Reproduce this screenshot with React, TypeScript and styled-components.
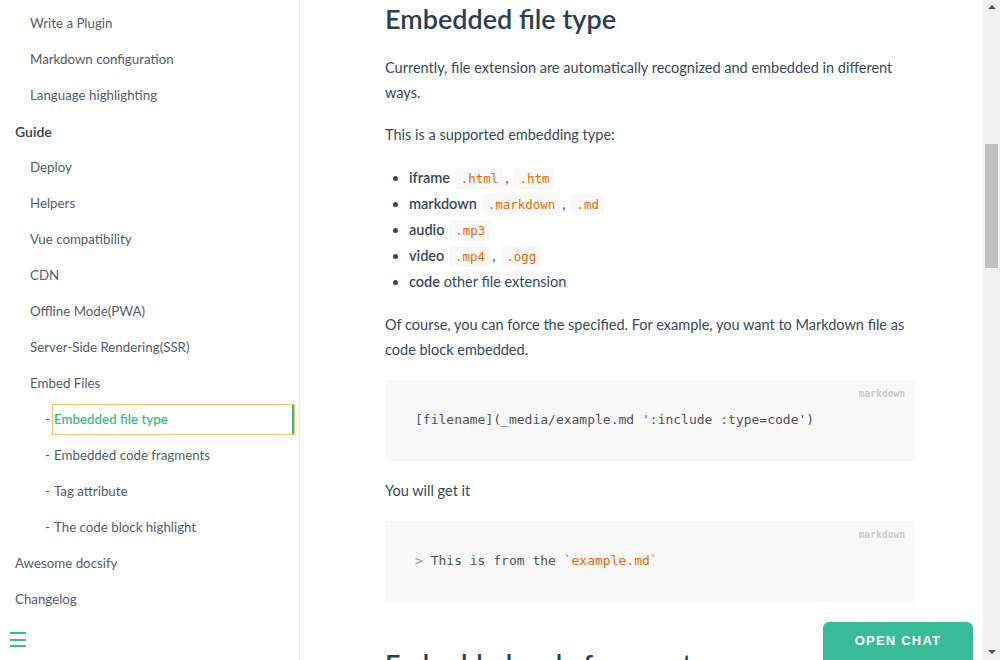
import React from "react";
import styled, { createGlobalStyle } from "styled-components";

interface NavItem {
    label: string;
    level: 0 | 1 | 2;
    section?: boolean;
    active?: boolean;
}

const navItems: NavItem[] = [
    { label: "Write a Plugin", level: 1 },
    { label: "Markdown configuration", level: 1 },
    { label: "Language highlighting", level: 1 },
    { label: "Guide", level: 0, section: true },
    { label: "Deploy", level: 1 },
    { label: "Helpers", level: 1 },
    { label: "Vue compatibility", level: 1 },
    { label: "CDN", level: 1 },
    { label: "Offline Mode(PWA)", level: 1 },
    { label: "Server-Side Rendering(SSR)", level: 1 },
    { label: "Embed Files", level: 1 },
    { label: "Embedded file type", level: 2, active: true },
    { label: "Embedded code fragments", level: 2 },
    { label: "Tag attribute", level: 2 },
    { label: "The code block highlight", level: 2 },
    { label: "Awesome docsify", level: 0 },
    { label: "Changelog", level: 0 },
];

const MONO = `"DejaVu Sans Mono", "Liberation Mono", monospace`;

const GlobalStyle = createGlobalStyle`
    html, body {
        margin: 0;
        padding: 0;
        overflow: hidden;
        background: #fff;
    }
    body {
        font-family: Lato, "Noto Sans", sans-serif;
        color: #34495e;
        -webkit-font-smoothing: antialiased;
    }
    * {
        box-sizing: border-box;
    }
`;

const App: React.FC = () => {
    return (
        <Page>
            <GlobalStyle />
            <Sidebar>
                <NavList>
                    {navItems.map(item => (
                        <NavRow key={item.label} level={item.level}>
                            {item.level === 2 && <Dash>-</Dash>}
                            <NavLink $section={item.section} $active={item.active}>
                                {item.label}
                            </NavLink>
                        </NavRow>
                    ))}
                </NavList>
                <SidebarToggle aria-label="toggle sidebar">
                    <ToggleLine />
                    <ToggleLine />
                    <ToggleLine />
                </SidebarToggle>
            </Sidebar>

            <Main>
                <Article>
                    <H2>Embedded file type</H2>
                    <P>
                        Currently, file extension are automatically recognized and embedded in different
                        ways.
                    </P>
                    <P>This is a supported embedding type:</P>
                    <List>
                        <li>
                            <strong>iframe</strong> <Code>.html</Code>, <Code>.htm</Code>
                        </li>
                        <li>
                            <strong>markdown</strong> <Code>.markdown</Code>, <Code>.md</Code>
                        </li>
                        <li>
                            <strong>audio</strong> <Code>.mp3</Code>
                        </li>
                        <li>
                            <strong>video</strong> <Code>.mp4</Code>, <Code>.ogg</Code>
                        </li>
                        <li>
                            <strong>code</strong> other file extension
                        </li>
                    </List>
                    <P>
                        Of course, you can force the specified. For example, you want to Markdown file as
                        code block embedded.
                    </P>
                    <Pre>
                        <LangLabel>markdown</LangLabel>
                        <PreCode>[filename](_media/example.md ':include :type=code')</PreCode>
                    </Pre>
                    <P>You will get it</P>
                    <Pre>
                        <LangLabel>markdown</LangLabel>
                        <PreCode>
                            <Punct>&gt;</Punct> This is from the <Tick>`example.md`</Tick>
                        </PreCode>
                    </Pre>
                    <NextHeading>Embedded code fragments</NextHeading>
                </Article>
                <ChatButton>OPEN CHAT</ChatButton>
            </Main>

            <ScrollTrack>
                <ScrollArrow $up />
                <ScrollThumb />
                <ScrollArrow />
            </ScrollTrack>
        </Page>
    );
};

const Page = styled.div`
    display: flex;
    width: 100vw;
    height: 100vh;
    overflow: hidden;
`;

const Sidebar = styled.aside`
    width: 300px;
    flex-shrink: 0;
    display: flex;
    flex-direction: column;
    border-right: 1px solid rgba(0, 0, 0, 0.07);
    overflow: hidden;
`;

const NavList = styled.ul`
    list-style: none;
    margin: 0;
    padding: 5px 0 0;
    flex: 1;
    font-size: 13.3px;
`;

const NavRow = styled.li<{ level: number }>`
    display: flex;
    align-items: center;
    height: 36px;
    padding-left: ${p => (p.level === 0 ? 15 : p.level === 1 ? 30 : 45)}px;
    padding-right: 5px;
`;

const Dash = styled.span`
    width: 9px;
    color: #505d6b;
`;

const NavLink = styled.a<{ $section?: boolean; $active?: boolean }>`
    flex: ${p => (p.$active ? 1 : "0 1 auto")};
    display: block;
    line-height: 29px;
    color: ${p => (p.$active ? "#42b983" : p.$section ? "#364149" : "#505d6b")};
    font-weight: ${p => (p.$active || p.$section ? 600 : 400)};
    font-size: ${p => (p.$section ? "14px" : "13.3px")};
    text-decoration: none;
    white-space: nowrap;
    cursor: pointer;
    ${p =>
        p.$active &&
        `
        outline: 1px solid #f1c46c;
        border-right: 2px solid #42b983;
        margin-left: -1px;
        padding-left: 1px;
    `}
`;

const SidebarToggle = styled.button`
    display: flex;
    flex-direction: column;
    gap: 4.5px;
    width: 100%;
    padding: 11px 10px 13px;
    border: 0;
    background: rgba(255, 255, 255, 0.8);
    cursor: pointer;
`;

const ToggleLine = styled.span`
    display: block;
    width: 16px;
    height: 2px;
    background: #42b983;
`;

const Main = styled.main`
    flex: 1;
    position: relative;
    overflow: hidden;
`;

const Article = styled.section`
    width: 530px;
    margin-left: 85px;
    display: flex;
    flex-direction: column;
    gap: 17.5px;
    font-size: 14.5px;
    line-height: 25px;
`;

const H2 = styled.h2`
    margin: 1px 0 0;
    font-size: 27px;
    line-height: 36px;
    font-weight: 600;
    color: #2c3e50;
`;

const NextHeading = styled(H2)`
    margin-top: 27px;
`;

const P = styled.p`
    margin: 0;
    color: #34495e;
`;

const List = styled.ul`
    margin: 0;
    padding-left: 24px;
    color: #34495e;

    li {
        height: 26px;
        line-height: 26px;
    }

    strong {
        font-weight: 600;
    }
`;

const Code = styled.code`
    font-family: ${MONO};
    font-size: 12.5px;
    line-height: 16px;
    color: #e96900;
    background: #f8f8f8;
    border-radius: 2px;
    margin: 0 2px;
    padding: 3px 5px;
`;

const Pre = styled.pre`
    position: relative;
    margin: 0;
    padding: 0 25px;
    background: #f8f8f8;
    height: 81px;
    display: flex;
    align-items: center;
`;

const PreCode = styled.code`
    font-family: ${MONO};
    font-size: 13px;
    line-height: 24px;
    color: #525252;
    padding: 0 5px;
`;

const Punct = styled.span`
    color: #999;
`;

const Tick = styled.span`
    color: #e96900;
`;

const LangLabel = styled.span`
    position: absolute;
    top: 6px;
    right: 10px;
    font-family: ${MONO};
    font-size: 9.6px;
    font-weight: 700;
    line-height: 16px;
    color: #ccc;
`;

const ChatButton = styled.button`
    position: fixed;
    right: 27px;
    bottom: -2px;
    width: 150px;
    height: 40px;
    padding: 0 0 4px;
    border: 0;
    border-radius: 6px 6px 0 0;
    background: #37bc96;
    color: #fff;
    font-family: "Liberation Sans", Arial, sans-serif;
    font-size: 13px;
    font-weight: 700;
    letter-spacing: 1.2px;
    cursor: pointer;
`;

const ScrollTrack = styled.div`
    width: 17px;
    flex-shrink: 0;
    display: flex;
    flex-direction: column;
    align-items: center;
    background: #f1f1f1;
`;

const ScrollArrow = styled.div<{ $up?: boolean }>`
    width: 0;
    height: 0;
    margin: ${p => (p.$up ? "5px 0 0" : "auto 0 6px")};
    border-left: 4px solid transparent;
    border-right: 4px solid transparent;
    ${p => (p.$up ? "border-bottom: 4px solid #505050;" : "border-top: 4px solid #505050;")}
`;

const ScrollThumb = styled.div`
    width: 13px;
    height: 124px;
    margin-top: 135px;
    background: #c1c1c1;
`;

export default App;
